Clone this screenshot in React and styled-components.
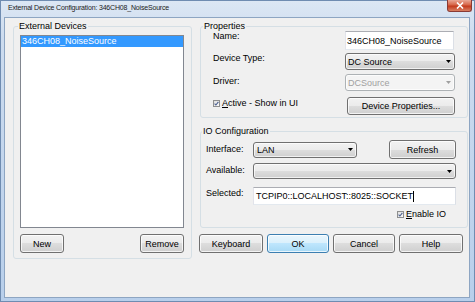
import React from 'react'
import styled, { createGlobalStyle } from 'styled-components'

const GlobalStyle = createGlobalStyle`
  html, body { margin: 0; padding: 0; }
  body {
    width: 475px;
    height: 302px;
    overflow: hidden;
    background: #fff;
    font-family: "Liberation Sans", Arial, sans-serif;
  }
`

const Frame = styled.div`
  box-sizing: border-box;
  width: 475px;
  height: 302px;
  border: 1px solid #6f8cb1;
  background: linear-gradient(to bottom, #dce7f4 0%, #cddcef 12%, #b8cfeb 100%);
  display: flex;
  flex-direction: column;
`

const TitleBar = styled.div`
  flex: none;
  height: 16px;
  display: flex;
  justify-content: space-between;
  align-items: flex-start;
  padding-left: 7px;
`

const Title = styled.span`
  margin-top: 3px;
  font-size: 7px;
  line-height: 8px;
  letter-spacing: -0.18px;
  color: #1b1b1b;
`

const CloseButton = styled.div`
  box-sizing: border-box;
  width: 25px;
  height: 12px;
  margin: -1px 2px 0 0;
  border: 1px solid #8a3a34;
  border-top: none;
  border-radius: 0 0 3px 3px;
  background: linear-gradient(#e9a796 0%, #d66447 45%, #c3391c 55%, #d98063 100%);
  display: flex;
  align-items: center;
  justify-content: center;
`

const Client = styled.div`
  flex: 1;
  margin: 0 4px 3px 3px;
  border: 1px solid #8da5c2;
  background: #f0f0f0;
  display: flex;
  align-items: flex-start;
  gap: 8px;
  padding: 3px 0 0 8px;
`

const Column = styled.div`
  width: 268px;
  display: flex;
  flex-direction: column;
`

const GroupBox = styled.fieldset`
  box-sizing: border-box;
  width: ${p => p.$w}px;
  min-width: 0;
  margin: ${p => p.$mt || 0}px 0 0 0;
  padding: 0;
  border: 1px solid #d5dfe5;
  border-radius: 3px;
`

const Legend = styled.legend`
  margin-left: ${p => p.$indent}px;
  padding: 0 1px;
  font-size: 9px;
  line-height: 11px;
  color: #000;
`

const GroupBody = styled.div`
  padding: ${p => p.$pad};
  display: flex;
  flex-direction: column;
`

const ListBox = styled.div`
  box-sizing: border-box;
  width: 164px;
  height: 193px;
  border: 1px solid #828790;
  background: #fff;
`

const ListItem = styled.div`
  height: 11px;
  padding-left: 1px;
  font-size: 9px;
  line-height: 11px;
  color: ${p => (p.$selected ? '#fff' : '#000')};
  background: ${p => (p.$selected ? '#3399ff' : 'transparent')};
`

const ButtonRow = styled.div`
  display: flex;
  justify-content: ${p => p.$justify || 'flex-start'};
  gap: ${p => p.$gap || 0}px;
  margin: ${p => p.$mt}px 0 0 ${p => p.$ml || 0}px;
`

const Button = styled.div`
  box-sizing: border-box;
  width: ${p => p.$w}px;
  height: ${p => p.$h || 19}px;
  margin-left: ${p => p.$ml || 0}px;
  border: 1px solid ${p => (p.$default ? '#3c7fb1' : '#707070')};
  border-radius: 3px;
  background: ${p =>
    p.$default
      ? 'linear-gradient(#eaf6fd 0%, #d9f0fc 50%, #bee6fd 50%, #a7d9f5 100%)'
      : 'linear-gradient(#f2f2f2 0%, #ebebeb 50%, #dddddd 50%, #cfcfcf 100%)'};
  box-shadow: inset 0 0 0 1px rgba(255, 255, 255, 0.75);
  display: flex;
  align-items: center;
  justify-content: center;
  font-size: 9px;
  color: #000;
`

const Row = styled.div`
  display: flex;
  align-items: ${p => p.$align || 'flex-start'};
  height: ${p => p.$h}px;
  margin-top: ${p => p.$mt || 0}px;
  padding-left: ${p => p.$indent || 0}px;
`

const Label = styled.div`
  flex: none;
  width: ${p => p.$w}px;
  padding-top: ${p => p.$dy || 0}px;
  font-size: 9px;
  line-height: 11px;
  color: #000;
`

const TextBox = styled.div`
  box-sizing: border-box;
  width: ${p => (p.$w ? `${p.$w}px` : 'auto')};
  flex: ${p => (p.$w ? 'none' : 1)};
  height: 100%;
  padding-left: ${p => p.$pl || 1}px;
  border: 1px solid;
  border-color: #abadb3 #dbdfe6 #e3e9ef #e2e3ea;
  background: #fff;
  display: flex;
  align-items: center;
  font-size: 9px;
  color: #000;
  white-space: nowrap;
`

const Caret = styled.span`
  width: 0;
  height: 11px;
  border-left: 1px solid #000;
`

const Combo = styled.div`
  box-sizing: border-box;
  width: ${p => (p.$w ? `${p.$w}px` : 'auto')};
  flex: ${p => (p.$w ? 'none' : 1)};
  height: ${p => p.$h}px;
  padding: 0 3px 0 ${p => p.$pl || 2}px;
  border: 1px solid ${p => (p.$disabled ? '#adb2b5' : '#707070')};
  border-radius: 3px;
  background: ${p =>
    p.$disabled
      ? '#f4f4f4'
      : 'linear-gradient(#f2f2f2 0%, #ebebeb 50%, #dddddd 50%, #cfcfcf 100%)'};
  box-shadow: inset 0 0 0 1px rgba(255, 255, 255, 0.7);
  display: flex;
  align-items: center;
  justify-content: space-between;
  font-size: 9px;
  color: ${p => (p.$disabled ? '#a0a0a0' : '#000')};
`

const CheckLabel = styled.div`
  display: flex;
  align-items: center;
  gap: 2px;
  font-size: 9px;
  line-height: 11px;
  color: #000;
  padding-top: ${p => p.$dy || 0}px;

  u { text-decoration: underline; }
`

const CheckBox = styled.span`
  box-sizing: border-box;
  width: 7px;
  height: 7px;
  border: 1px solid #8e8f8f;
  background: linear-gradient(135deg, #dedede, #fbfbfb);
  display: flex;
  align-items: center;
  justify-content: center;
`

const Arrow = ({ color = '#000' }) => (
  <svg width="5" height="3" viewBox="0 0 5 3">
    <path d="M0 0h5L2.5 3z" fill={color} />
  </svg>
)

const Check = () => (
  <CheckBox>
    <svg width="5" height="5" viewBox="0 0 5 5">
      <path d="M0.6 2.6 L1.9 4 L4.4 0.8" stroke="#4a5f8f" strokeWidth="1.1" fill="none" />
    </svg>
  </CheckBox>
)

export default function App() {
  return (
    <>
      <GlobalStyle />
      <Frame>
        <TitleBar>
          <Title>External Device Configuration: 346CH08_NoiseSource</Title>
          <CloseButton>
            <svg width="8" height="7" viewBox="0 0 8 7">
              <path d="M1 0.5 L7 6.5 M7 0.5 L1 6.5" stroke="#fff" strokeWidth="1.6" />
            </svg>
          </CloseButton>
        </TitleBar>

        <Client>
          <GroupBox $w={179}>
            <Legend $indent={4}>External Devices</Legend>
            <GroupBody $pad="3px 7px 5px 6px">
              <ListBox>
                <ListItem $selected>346CH08_NoiseSource</ListItem>
              </ListBox>
              <ButtonRow $mt={6} $justify="space-between">
                <Button $w={44}>New</Button>
                <Button $w={44}>Remove</Button>
              </ButtonRow>
            </GroupBody>
          </GroupBox>

          <Column>
            <GroupBox $w={268}>
              <Legend $indent={2}>Properties</Legend>
              <GroupBody $pad="0 12px 2px 12px">
                <Row $h={19} $mt={-1}>
                  <Label $w={132}>Name:</Label>
                  <TextBox $w={109}>346CH08_NoiseSource</TextBox>
                </Row>
                <Row $h={17} $mt={3}>
                  <Label $w={132}>Device Type:</Label>
                  <Combo $w={110} $h={17}>
                    <span>DC Source</span>
                    <Arrow />
                  </Combo>
                </Row>
                <Row $h={17} $mt={4}>
                  <Label $w={132} $dy={2}>Driver:</Label>
                  <Combo $w={110} $h={17} $disabled>
                    <span>DCSource</span>
                    <Arrow color="#a0a0a0" />
                  </Combo>
                </Row>
                <Row $h={18} $mt={6}>
                  <CheckLabel $dy={1} style={{ width: 134 }}>
                    <Check />
                    <span><u>A</u>ctive - Show in UI</span>
                  </CheckLabel>
                  <Button $w={108} $h={18}>Device Properties...</Button>
                </Row>
              </GroupBody>
            </GroupBox>

            <GroupBox $w={268} $mt={8}>
              <Legend $indent={1}>IO Configuration</Legend>
              <GroupBody $pad="3px 11px 7px 5px">
                <Row $h={19} $align="center">
                  <Label $w={47} $dy={0}>Interface:</Label>
                  <Combo $w={104} $h={16} $pl={3}>
                    <span>LAN</span>
                    <Arrow />
                  </Combo>
                  <Button $w={67} $ml={32}>Refresh</Button>
                </Row>
                <Row $h={16} $mt={4}>
                  <Label $w={47} $dy={2}>Available:</Label>
                  <Combo $h={16}>
                    <span />
                    <Arrow />
                  </Combo>
                </Row>
                <Row $h={18} $mt={8}>
                  <Label $w={47} $dy={1}>Selected:</Label>
                  <TextBox $pl={2}>
                    TCPIP0::LOCALHOST::8025::SOCKET
                    <Caret />
                  </TextBox>
                </Row>
                <Row $h={11} $mt={4} $indent={191}>
                  <CheckLabel>
                    <Check />
                    <span><u>E</u>nable IO</span>
                  </CheckLabel>
                </Row>
              </GroupBody>
            </GroupBox>

            <ButtonRow $mt={6} $ml={-1} $gap={4}>
              <Button $w={64}>Keyboard</Button>
              <Button $w={62} $default>OK</Button>
              <Button $w={62}>Cancel</Button>
              <Button $w={64}>Help</Button>
            </ButtonRow>
          </Column>
        </Client>
      </Frame>
    </>
  )
}
